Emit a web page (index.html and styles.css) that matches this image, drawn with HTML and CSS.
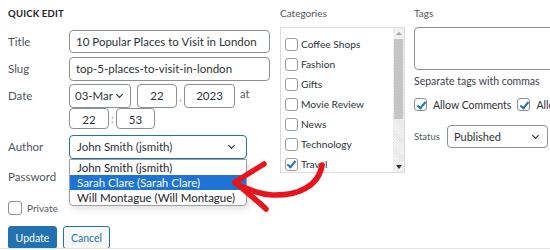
FILE: index.html
```html
<!DOCTYPE html>
<html lang="en">
<head>
  <meta charset="UTF-8" />
  <title>Quick Edit</title>
  <link rel="stylesheet" href="styles.css">
</head>
<body>
  <div class="quick-edit">
    <div class="col-main">
      <div class="legend">QUICK EDIT</div>

      <div class="row row-title">
        <span class="label">Title</span>
        <div class="input wide">10 Popular Places to Visit in London</div>
      </div>
      <div class="row row-slug">
        <span class="label">Slug</span>
        <div class="input wide">top-5-places-to-visit-in-london</div>
      </div>
      <div class="row row-date">
        <span class="label">Date</span>
        <div class="date-fields">
          <div class="line">
            <div class="input select month">03-Mar <span class="chev"></span></div>
            <div class="input num day">22</div>
            <span class="sep">,</span>
            <div class="input num year">2023</div>
            <span class="at">at</span>
          </div>
          <div class="line">
            <div class="input num hour">22</div>
            <span class="sep">:</span>
            <div class="input num minute">53</div>
          </div>
        </div>
      </div>
      <div class="row row-author">
        <span class="label">Author</span>
        <div class="author-wrap">
          <div class="input select focus wide">John Smith (jsmith) <span class="chev"></span></div>
          <ul class="dropdown">
            <li>John Smith (jsmith)</li>
            <li class="active">Sarah Clare (Sarah Clare)</li>
            <li>Will Montague (Will Montague)</li>
          </ul>
        </div>
      </div>
      <div class="row row-password">
        <span class="label">Password</span>
      </div>
      <div class="row row-private">
        <span class="box"></span>
        <span class="text">Private</span>
      </div>
      <div class="buttons">
        <button class="btn primary">Update</button>
        <button class="btn secondary">Cancel</button>
      </div>
    </div>

    <div class="col-cats">
      <div class="col-title">Categories</div>
      <div class="cat-box">
        <ul class="cat-list">
          <li><span class="box"></span>Coffee Shops</li>
          <li><span class="box"></span>Fashion</li>
          <li><span class="box"></span>Gifts</li>
          <li><span class="box"></span>Movie Review</li>
          <li><span class="box"></span>News</li>
          <li><span class="box"></span>Technology</li>
          <li><span class="box checked"></span>Travel</li>
        </ul>
        <div class="scrollbar">
          <span class="arrow up"></span>
          <div class="track"><div class="thumb"></div></div>
          <span class="arrow down"></span>
        </div>
      </div>
    </div>

    <div class="col-tags">
      <div class="col-title">Tags</div>
      <div class="textarea"></div>
      <div class="help">Separate tags with commas</div>
      <div class="allow">
        <span class="box checked"></span><span class="text">Allow Comments</span>
        <span class="box checked"></span><span class="text">Allow Pings</span>
      </div>
      <div class="status">
        <span class="status-label">Status</span>
        <div class="input select status-select">Published <span class="chev"></span></div>
      </div>
    </div>
  </div>

  <svg class="pointer" viewBox="0 0 550 250" width="550" height="250">
    <path d="M322 165 C 319 186, 298 196, 272 195 C 258 194, 246 189, 235 183" />
    <path d="M264 164 L 235 182 C 246 192, 258 201, 266 209" />
  </svg>
</body>
</html>
```

FILE: styles.css
```css
body {
  margin: 0;
  background: #fff;
  font-family: Lato, "Liberation Sans", sans-serif;
  color: #2c3338;
  width: 550px;
  height: 250px;
  overflow: hidden;
  position: relative;
}
.quick-edit {
  display: flex;
  box-sizing: border-box;
  width: 550px;
  height: 249px;
  border-bottom: 1px solid #e4e4e4;
  padding-left: 8px;
  overflow: hidden;
}
.col-main {
  width: 262px;
  flex-shrink: 0;
}
.legend {
  font-size: 9.5px;
  font-weight: bold;
  color: #1d2327;
  height: 30px;
  line-height: 28px;
  letter-spacing: 0.2px;
}
.row {
  display: flex;
  align-items: flex-start;
}
.label {
  width: 61px;
  flex-shrink: 0;
  font-size: 11.5px;
  color: #50575e;
  line-height: 23px;
}
.input {
  box-sizing: border-box;
  height: 23px;
  border: 1px solid #8c8f94;
  border-radius: 4px;
  background: #fff;
  font-size: 11.5px;
  line-height: 21px;
  padding: 0 6px;
  white-space: nowrap;
  overflow: hidden;
  color: #2c3338;
  position: relative;
}
.input.wide {
  width: 201px;
}
.row-title {
  height: 27px;
}
.row-slug {
  height: 27px;
}
.row-slug .input {
  height: 24px;
  line-height: 22px;
}
.date-fields .line {
  display: flex;
  align-items: center;
  height: 24px;
}
.date-fields .line + .line {
  height: 21px;
}
.input.num {
  text-align: center;
  padding: 0;
}
.month {
  width: 62px;
  height: 24px;
  padding-left: 5px;
}
.day {
  width: 40px;
  height: 24px;
  margin-left: 6px;
}
.year {
  width: 51px;
  height: 24px;
}
.hour {
  width: 40px;
  height: 21px;
  line-height: 21px;
}
.minute {
  width: 39px;
  height: 21px;
  line-height: 21px;
}
.sep {
  width: 7px;
  text-align: center;
  font-size: 11px;
  color: #8c8f94;
}
.at {
  margin-left: 5px;
  font-size: 11px;
  color: #50575e;
  align-self: flex-start;
  line-height: 20px;
}
.chev {
  position: absolute;
  right: 8px;
  top: 7px;
  width: 4px;
  height: 4px;
  border-right: 1.6px solid #1d2327;
  border-bottom: 1.6px solid #1d2327;
  transform: rotate(45deg);
}
.row-date {
  height: 51px;
}
.row-author {
  height: 29px;
}
.row-author .label {
  line-height: 24px;
}
.author-wrap {
  position: relative;
}
.input.focus {
  border-color: #2271b1;
  width: 178px;
  height: 24px;
  line-height: 22px;
  padding-left: 7px;
}
.input.focus .chev {
  right: 12px;
}
.dropdown {
  position: absolute;
  top: 24px;
  left: 0;
  width: 178px;
  box-sizing: border-box;
  margin: 0;
  padding: 0;
  list-style: none;
  background: #fff;
  border: 1px solid #a0a0a0;
  border-radius: 0 0 4px 4px;
  box-shadow: 2px 3px 6px rgba(0, 0, 0, 0.12);
  font-size: 11.5px;
  z-index: 2;
}
.dropdown li {
  height: 15px;
  line-height: 15px;
  padding: 0 7px;
  white-space: nowrap;
  color: #1d2327;
}
.dropdown li.active {
  background: #1e73d6;
  color: #fff;
}
.row-password {
  height: 28px;
}
.row-password .label {
  line-height: 26px;
}
.row-private {
  align-items: center;
  height: 30px;
  padding-top: 2px;
  box-sizing: border-box;
}
.box {
  box-sizing: border-box;
  display: inline-block;
  width: 14px;
  height: 14px;
  border: 1px solid #8c8f94;
  border-radius: 3px;
  background: #fff;
  position: relative;
  flex-shrink: 0;
}
.box.checked::after {
  content: "";
  position: absolute;
  left: 4px;
  top: 1px;
  width: 3px;
  height: 7px;
  border-right: 2px solid #2271b1;
  border-bottom: 2px solid #2271b1;
  transform: rotate(40deg);
}
.row-private .text {
  margin-left: 5px;
  font-size: 10px;
  color: #50575e;
}
.buttons {
  display: flex;
  gap: 6px;
  margin-top: 4px;
}
.btn {
  box-sizing: border-box;
  height: 23px;
  padding: 0;
  border-radius: 3px;
  font-family: inherit;
  font-size: 10.5px;
  cursor: pointer;
}
.btn.primary {
  width: 49px;
  background: #2271b1;
  border: 1px solid #2271b1;
  color: #fff;
}
.btn.secondary {
  width: 47px;
  background: #f6f7f7;
  border: 1px solid #2271b1;
  color: #2271b1;
}
.col-cats {
  width: 125px;
  flex-shrink: 0;
  margin-left: 10px;
}
.col-title {
  font-size: 10px;
  color: #50575e;
  height: 27px;
  line-height: 26px;
}
.cat-box {
  box-sizing: border-box;
  height: 146px;
  border: 1px solid #dcdcde;
  display: flex;
}
.cat-list {
  flex: 1;
  list-style: none;
  margin: 0;
  padding: 6px 0 0 4px;
  overflow: hidden;
}
.cat-list li {
  display: flex;
  align-items: center;
  gap: 3px;
  height: 20px;
  font-size: 10.2px;
  color: #2c3338;
  white-space: nowrap;
}
.cat-list .box {
  width: 13px;
  height: 13px;
  border-color: #9a9a9a;
}
.cat-list .box.checked::after {
  left: 3px;
  top: 0;
}
.scrollbar {
  width: 11px;
  display: flex;
  flex-direction: column;
  background: #f0f0f0;
}
.arrow {
  height: 11px;
  display: flex;
  justify-content: center;
  align-items: center;
}
.arrow::before {
  content: "";
  border-left: 3px solid transparent;
  border-right: 3px solid transparent;
}
.arrow.up::before {
  border-bottom: 3px solid #a3a3a3;
}
.arrow.down::before {
  border-top: 4px solid #303030;
}
.track {
  flex: 1;
  background: repeating-linear-gradient(45deg, #f3f3f3 0 1px, #e6e6e6 1px 2px);
}
.thumb {
  height: 80px;
  margin: 0 1px;
  background: #c5c5c5;
}
.col-tags {
  margin-left: 9px;
  flex: 1;
  min-width: 0;
}
.textarea {
  box-sizing: border-box;
  height: 43px;
  width: 200px;
  border: 1px solid #8c8f94;
  border-radius: 4px;
}
.help {
  font-size: 10.5px;
  color: #3c434a;
  height: 20px;
  line-height: 22px;
  white-space: nowrap;
}
.allow {
  display: flex;
  align-items: center;
  height: 26px;
  padding-top: 3px;
  box-sizing: border-box;
  white-space: nowrap;
}
.allow .box {
  width: 13px;
  height: 13px;
}
.allow .text {
  font-size: 10.5px;
  color: #2c3338;
  margin: 0 6px 0 6px;
}
.status {
  display: flex;
  align-items: center;
  margin-top: 9px;
}
.status-label {
  width: 33px;
  font-size: 9.5px;
  color: #50575e;
}
.status-select {
  width: 101px;
  height: 23px;
  font-size: 11px;
  padding-left: 6px;
}
.status-select .chev {
  right: 9px;
}
.pointer {
  position: absolute;
  left: 0;
  top: 0;
  pointer-events: none;
  z-index: 5;
}
.pointer path {
  fill: none;
  stroke: #e8141c;
  stroke-width: 5.5;
  stroke-linecap: round;
  stroke-linejoin: round;
}
```
